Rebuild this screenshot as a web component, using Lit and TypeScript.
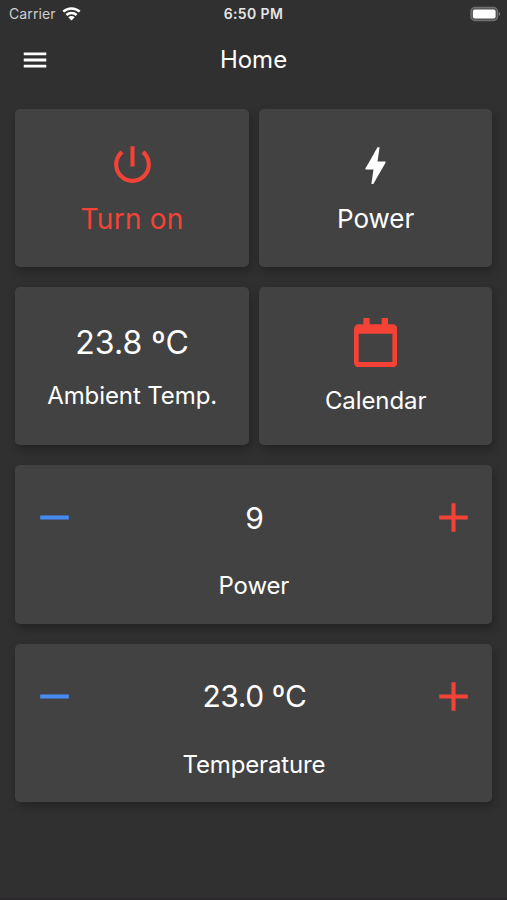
import { LitElement, html, css, svg } from "lit";
import { customElement, property } from "lit/decorators.js";

const PATHS = {
  menu: "M3 18h18v-2.3H3v2.3zm0-4.9h18v-2.3H3v2.3zm0-7.2v2.3h18V5.9H3z",
  power:
    "M13 3h-2v10h2V3zm4.83 2.17l-1.42 1.42C17.99 7.86 19 9.81 19 12c0 3.87-3.13 7-7 7s-7-3.13-7-7c0-2.19 1.01-4.14 2.58-5.42L6.17 5.17C4.23 6.82 3 9.26 3 12c0 4.97 4.03 9 9 9s9-4.03 9-9c0-2.74-1.23-5.18-3.17-6.83z",
  bolt: "M11 21h-1l1-7H7.5c-.58 0-.57-.32-.38-.66.19-.34.05-.08.07-.12C8.48 10.94 10.42 7.54 13 3h1l-1 7h3.5c.49 0 .56.33.47.51l-.07.15C12.96 17.55 11 21 11 21z",
  add: "M19 13h-6v6h-2v-6H5v-2h6V5h2v6h6v2z",
  remove: "M19 13H5v-2h14v2z",
};

const icon = (name: keyof typeof PATHS) =>
  html`<svg class="icon ${name}" viewBox="0 0 24 24">${svg`<path fill="currentColor" d=${PATHS[name]} />`}</svg>`;

const shared = css`
  .icon {
    display: block;
    width: 49px;
    height: 49px;
    flex: none;
  }
`;

@customElement("status-bar")
class StatusBar extends LitElement {
  static styles = css`
    :host {
      display: grid;
      grid-template-columns: 1fr auto 1fr;
      align-items: center;
      height: 28px;
      padding: 0 6px;
      font-size: 14px;
      line-height: 28px;
      color: #e6e6e6;
    }
    .left {
      display: flex;
      align-items: center;
      gap: 6px;
      padding-left: 3px;
    }
    .carrier {
      color: #cfcfcf;
      letter-spacing: 0.12px;
    }
    .time {
      font-weight: 600;
      letter-spacing: 0.4px;
    }
    .wifi {
      width: 19px;
      height: 15px;
      margin-top: -2px;
    }
    .battery {
      justify-self: end;
      width: 31px;
      height: 16px;
      margin-top: -1px;
    }
  `;
  render() {
    return html`
      <div class="left">
        <span class="carrier">Carrier</span>
        <svg class="wifi" viewBox="0 0 19 15">
          <g fill="none" stroke="#fff" stroke-width="2.5">
            <path d="M1.3 5.7a11.8 11.8 0 0 1 16.4 0" />
            <path d="M4.4 9a7.4 7.4 0 0 1 10.2 0" />
          </g>
          <path fill="#fff" d="M9.5 14.6L6.3 11.3a4.6 4.6 0 0 1 6.4 0z" />
        </svg>
      </div>
      <span class="time">6:50 PM</span>
      <svg class="battery" viewBox="0 0 31 16">
        <rect x="1" y="1.5" width="26.5" height="13" rx="4" fill="#505050" stroke="#707070" stroke-width="1.4" />
        <rect x="2.9" y="3.4" width="22.7" height="9.2" rx="2" fill="#fff" />
        <path d="M28.8 5.8q2.6 2.2 0 4.4z" fill="#858585" />
      </svg>
    `;
  }
}

@customElement("stepper-card")
class StepperCard extends LitElement {
  @property() value = "";
  @property() label = "";
  static styles = [
    shared,
    css`
      :host {
        display: block;
        grid-column: 1 / -1;
      }
      .row {
        display: flex;
        justify-content: space-between;
        align-items: center;
        padding: 28px 14px 0 15px;
      }
      .value {
        font-size: 30px;
        line-height: 40px;
        letter-spacing: -0.4px;
      }
      .label {
        margin-top: 26px;
        text-align: center;
        font-size: 24px;
        line-height: 36px;
        letter-spacing: -0.15px;
      }
      .minus {
        color: #478bf2;
      }
      .plus {
        color: #f44336;
      }
    `,
  ];
  render() {
    return html`
      <div class="row">
        <span class="minus">${icon("remove")}</span>
        <span class="value">${this.value}</span>
        <span class="plus">${icon("add")}</span>
      </div>
      <div class="label">${this.label}</div>
    `;
  }
}

@customElement("app-root")
class AppRoot extends LitElement {
  static styles = [
    shared,
    css`
      :host {
        display: block;
        box-sizing: border-box;
        height: 900px;
        background: #303030;
        border-bottom: 2px solid #2b272a;
        color: #fff;
        font-family: Inter, "Liberation Sans", sans-serif;
        overflow: hidden;
      }
      .bar {
        display: grid;
        grid-template-columns: 1fr auto 1fr;
        align-items: center;
        height: 64px;
        padding: 0 20px;
      }
      .bar .icon {
        width: 30px;
        height: 30px;
      }
      .title {
        font-size: 24px;
        line-height: 30px;
      }
      .grid {
        display: grid;
        grid-template-columns: 1fr 1fr;
        grid-auto-rows: 158.4px;
        gap: 20px 10px;
        padding: 16.6px 14.6px 0 15.4px;
      }
      .card {
        background: #424242;
        border-radius: 5px;
        box-shadow: 2px 5px 10px rgba(0, 0, 0, 0.26);
      }
      .tile {
        display: flex;
        flex-direction: column;
        align-items: center;
      }
      .tile .icon {
        margin-top: 31px;
      }
      .tile .bolt {
        margin-top: 32px;
      }
      .on {
        color: #f44336;
      }
      .big {
        margin-top: 12px;
        font-size: 28px;
        line-height: 36px;
        letter-spacing: 0.25px;
      }
      .mid {
        margin-top: 11.5px;
        font-size: 26px;
        line-height: 36px;
      }
      .temp {
        margin-top: 36px;
        font-size: 32px;
        line-height: 40px;
      }
      .small {
        font-size: 24px;
        line-height: 36px;
        letter-spacing: -0.1px;
      }
      .ambient {
        margin-top: 15px;
      }
      .calendar {
        width: 43.4px;
        height: 49.4px;
        margin-top: 31px;
        color: #f44336;
      }
      .cal {
        margin-top: 15.5px;
      }
    `,
  ];
  render() {
    return html`
      <status-bar></status-bar>
      <header class="bar">
        ${icon("menu")}
        <span class="title">Home</span>
      </header>
      <main class="grid">
        <section class="card tile on">
          ${icon("power")}
          <span class="big">Turn on</span>
        </section>
        <section class="card tile">
          ${icon("bolt")}
          <span class="mid">Power</span>
        </section>
        <section class="card tile">
          <span class="temp">23.8 ºC</span>
          <span class="small ambient">Ambient Temp.</span>
        </section>
        <section class="card tile">
          <svg class="calendar" viewBox="0 0 130 148">
            <path
              fill="currentColor"
              fill-rule="evenodd"
              d="M28 0h19v19h36V0h19v19h14a14 14 0 0 1 14 14v101a14 14 0 0 1-14 14H14a14 14 0 0 1-14-14V33a14 14 0 0 1 14-14h14zM14 47v85h101V47z"
            />
          </svg>
          <span class="small cal">Calendar</span>
        </section>
        <stepper-card class="card" value="9" label="Power"></stepper-card>
        <stepper-card class="card" value="23.0 ºC" label="Temperature"></stepper-card>
      </main>
    `;
  }
}
